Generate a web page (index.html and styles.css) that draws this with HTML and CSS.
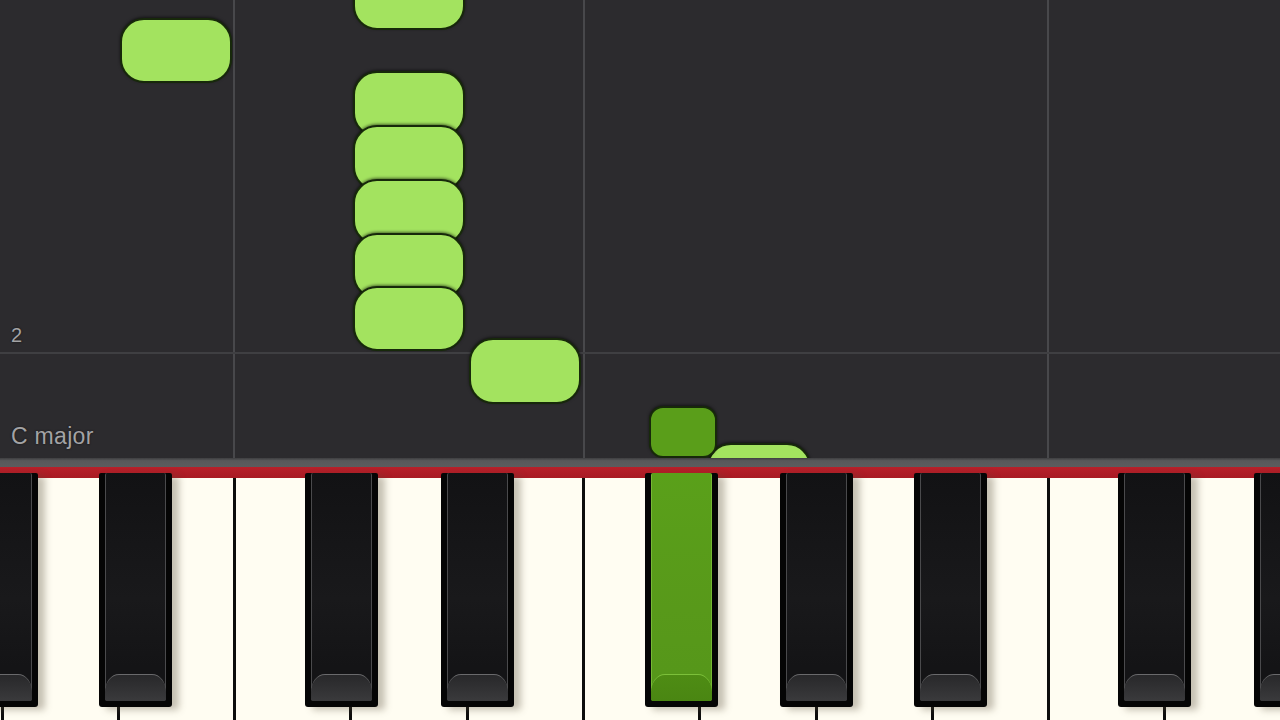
FILE: index.html
```html
<!DOCTYPE html>
<html>
<head>
<meta charset="utf-8">
<link rel="stylesheet" href="styles.css">
</head>
<body>
<div class="app">
  <div class="roll">
    <div class="vline" style="left:233px"></div>
    <div class="vline" style="left:583px"></div>
    <div class="vline" style="left:1047px"></div>
    <div class="hline" style="top:352px"></div>

    <div class="note" style="left:120px;top:18px;width:112px;height:65px"></div>
    <div class="note" style="left:353px;top:-36px;width:112px;height:66px"></div>
    <div class="note" style="left:353px;top:71px;width:112px;height:66px"></div>
    <div class="note" style="left:353px;top:125px;width:112px;height:66px"></div>
    <div class="note" style="left:353px;top:179px;width:112px;height:66px"></div>
    <div class="note" style="left:353px;top:233px;width:112px;height:66px"></div>
    <div class="note" style="left:353px;top:286px;width:112px;height:65px"></div>
    <div class="note" style="left:469px;top:338px;width:112px;height:66px"></div>
    <div class="note" style="left:707px;top:443px;width:104px;height:66px"></div>
    <div class="note note-active" style="left:649px;top:406px;width:68px;height:52px"></div>

    <span class="label label-bar">2</span>
    <span class="label label-key">C major</span>
  </div>
  <div class="divider"></div>
  <div class="redbar"></div>
  <div class="keyboard">
    <div class="whites">
      <div class="wk"></div>
      <div class="wk"></div>
      <div class="wk"></div>
      <div class="wk"></div>
      <div class="wk"></div>
      <div class="wk"></div>
      <div class="wk"></div>
      <div class="wk"></div>
      <div class="wk"></div>
      <div class="wk"></div>
      <div class="wk"></div>
      <div class="wk"></div>
    </div>
    <div class="bk" style="left:-35px"><div class="face"></div></div>
    <div class="bk" style="left:99px"><div class="face"></div></div>
    <div class="bk" style="left:305px"><div class="face"></div></div>
    <div class="bk" style="left:441px"><div class="face"></div></div>
    <div class="bk bk-active" style="left:645px"><div class="face"></div></div>
    <div class="bk" style="left:780px"><div class="face"></div></div>
    <div class="bk" style="left:914px"><div class="face"></div></div>
    <div class="bk" style="left:1118px"><div class="face"></div></div>
    <div class="bk" style="left:1254px"><div class="face"></div></div>
  </div>
</div>
</body>
</html>
```
FILE: styles.css
```css
* { box-sizing: border-box; }
html, body { margin: 0; padding: 0; }
body {
  width: 1280px;
  height: 720px;
  overflow: hidden;
  background: #2c2b2e;
  font-family: "Liberation Sans", Arial, sans-serif;
}
.app {
  display: flex;
  flex-direction: column;
  width: 1280px;
  height: 720px;
}
.roll {
  position: relative;
  height: 458px;
  flex: none;
  overflow: hidden;
  background: #2c2b2e;
}
.vline {
  position: absolute;
  top: 0;
  bottom: 0;
  width: 2px;
  background: #48484b;
}
.hline {
  position: absolute;
  left: 0;
  right: 0;
  height: 2px;
  background: #3f3f42;
}
.note {
  position: absolute;
  background: #a3e35f;
  border: 2.5px solid #17290a;
  border-radius: 24px;
  box-shadow: 0 -1px 3px rgba(0,0,0,0.55);
}
.note-active {
  background: #5a9e1a;
  border-radius: 14px;
}
.label {
  position: absolute;
  color: #a3a3a5;
  text-shadow: 0 0 2px #111;
}
.label-bar {
  left: 11px;
  top: 324px;
  font-size: 20px;
}
.label-key {
  left: 11px;
  top: 423px;
  font-size: 23px;
  letter-spacing: 0.3px;
}
.divider {
  height: 9px;
  flex: none;
  background: linear-gradient(#3e3e40, #58585a 30%, #5c5c5e);
}
.redbar {
  height: 11px;
  flex: none;
  background: linear-gradient(#b8202a, #a81b23);
}
.keyboard {
  position: relative;
  flex: 1;
  background: #fffdf2;
}
.whites {
  display: flex;
  height: 100%;
  margin-left: -112.8px;
}
.wk {
  flex: none;
  width: 116.3px;
  height: 100%;
  border-right: 3px solid #0d0d0d;
  background: #fffdf2;
}
.bk {
  position: absolute;
  top: -5px;
  width: 73px;
  height: 234px;
  padding: 0 6px 6px 6px;
  background: #050505;
  border-radius: 2px 2px 3px 3px;
  box-shadow: 7px 3px 7px rgba(90, 80, 60, 0.35);
}
.bk .face {
  position: relative;
  height: 100%;
  background: linear-gradient(#121214, #19191b 55%, #141416 85%);
  border-left: 1px solid #4a4a4c;
  border-right: 1px solid #4a4a4c;
  border-radius: 2px 2px 3px 3px;
}
.bk .face::after {
  content: "";
  position: absolute;
  left: -1px;
  right: -1px;
  bottom: 0;
  height: 26px;
  background: linear-gradient(#28282a, #3a3a3c);
  border-top: 1px solid #6a6a6c;
  border-radius: 14px 14px 2px 2px / 18px 18px 2px 2px;
}
.bk-active .face {
  background: linear-gradient(#5aa01a, #58991a 60%, #55961a);
  border-left: 1px solid #76b834;
  border-right: 1px solid #76b834;
}
.bk-active .face::after {
  background: linear-gradient(#4e8c14, #4a8612);
  border-top: 1px solid #7cc03a;
}
```
